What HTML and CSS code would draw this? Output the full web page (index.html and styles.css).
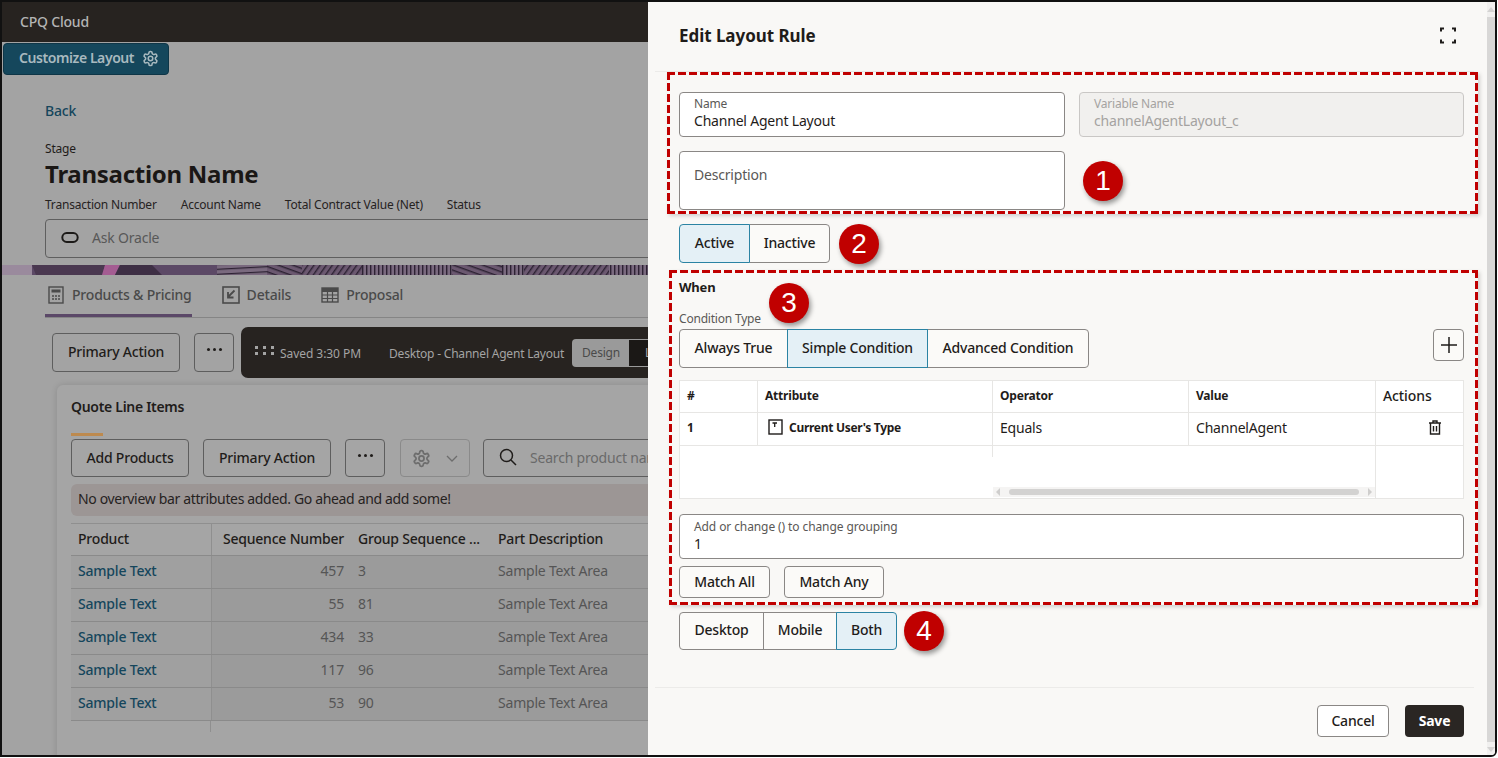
FILE: index.html
```html
<!DOCTYPE html>
<html lang="en">
<head>
<meta charset="utf-8">
<title>Edit Layout Rule</title>
<link rel="stylesheet" href="styles.css">
</head>
<body>
<svg class="sprite" width="0" height="0" aria-hidden="true">
  <symbol id="gear" viewBox="0 0 24 24">
    <path fill="none" stroke="currentColor" stroke-width="2.2" stroke-linejoin="round" d="M12.22 2h-.44a2 2 0 0 0-2 2v.18a2 2 0 0 1-1 1.73l-.43.25a2 2 0 0 1-2 0l-.15-.08a2 2 0 0 0-2.73.73l-.22.38a2 2 0 0 0 .73 2.73l.15.1a2 2 0 0 1 1 1.72v.51a2 2 0 0 1-1 1.74l-.15.09a2 2 0 0 0-.73 2.73l.22.38a2 2 0 0 0 2.73.73l.15-.08a2 2 0 0 1 2 0l.43.25a2 2 0 0 1 1 1.73V20a2 2 0 0 0 2 2h.44a2 2 0 0 0 2-2v-.18a2 2 0 0 1 1-1.73l.43-.25a2 2 0 0 1 2 0l.15.08a2 2 0 0 0 2.73-.73l.22-.39a2 2 0 0 0-.73-2.73l-.15-.08a2 2 0 0 1-1-1.74v-.5a2 2 0 0 1 1-1.74l.15-.09a2 2 0 0 0 .73-2.73l-.22-.38a2 2 0 0 0-2.73-.73l-.15.08a2 2 0 0 1-2 0l-.43-.25a2 2 0 0 1-1-1.73V4a2 2 0 0 0-2-2z"/>
    <circle cx="12" cy="12" r="3.2" fill="none" stroke="currentColor" stroke-width="2.2"/>
  </symbol>
  <pattern id="h1" width="5" height="5" patternUnits="userSpaceOnUse" patternTransform="rotate(20)"><rect width="5" height="5" fill="#6b5870"/><rect width="5" height="1.4" fill="#2d2233"/></pattern>
  <pattern id="h2" width="5" height="5" patternUnits="userSpaceOnUse" patternTransform="rotate(-55)"><rect width="5" height="5" fill="#6b5870"/><rect width="5" height="1.4" fill="#2d2233"/></pattern>
  <pattern id="h3" width="4" height="4" patternUnits="userSpaceOnUse"><rect width="4" height="4" fill="#7a6a7f"/><rect width="1.4" height="4" fill="#2d2233"/></pattern>
  <pattern id="h4" width="5" height="5" patternUnits="userSpaceOnUse" patternTransform="rotate(-3)"><rect width="5" height="5" fill="#7a6a7f"/><rect width="5" height="1.2" fill="#2d2233"/></pattern>
</svg>

<div class="frame">
  <main class="page">
    <header class="topbar">CPQ Cloud</header>
    <button class="customize"><span>Customize Layout</span>
      <svg class="customize-gear"><use href="#gear"/></svg>
    </button>
    <section class="head">
      <a class="back">Back</a>
      <div class="stage">Stage</div>
      <h1 class="txn-name">Transaction Name</h1>
      <div class="meta"><span>Transaction Number</span><span>Account Name</span><span>Total Contract Value (Net)</span><span>Status</span></div>
      <div class="ask">
        <svg class="oracle" viewBox="0 0 16 10"><rect x="1" y="1" width="14" height="8" rx="4" fill="none" stroke="#1c1a18" stroke-width="1.8"/></svg>
        <span>Ask Oracle</span>
      </div>
    </section>
    <svg class="banner" viewBox="0 0 646 10" preserveAspectRatio="none" aria-hidden="true">
      <rect width="646" height="10" fill="#5c4966"/>
      <rect width="30" height="10" fill="#9a8a9d"/>
      <path d="M30 0H103L100 10H34Z" fill="#4a3850"/>
      <path d="M103 0H118L113 10H100Z" fill="#a45c92"/>
      <path d="M118 0H150L160 10H113Z" fill="#3e2f45"/>
      <rect x="215" width="50" height="10" fill="url(#h4)"/>
      <rect x="265" width="35" height="10" fill="url(#h1)"/>
      <rect x="300" width="60" height="10" fill="url(#h2)"/>
      <rect x="360" width="90" height="10" fill="url(#h3)"/>
      <rect x="450" width="50" height="10" fill="url(#h1)"/>
      <rect x="500" width="22" height="10" fill="url(#h3)"/>
      <rect x="522" width="85" height="10" fill="url(#h2)"/>
      <rect x="607" width="39" height="10" fill="url(#h3)"/>
    </svg>
    <nav class="tabs">
      <a class="tab tab-on">
        <svg class="tab-ico" viewBox="0 0 16 18"><rect x="1" y="1" width="14" height="16" fill="none" stroke="currentColor" stroke-width="1.4"/><rect x="3.5" y="3.5" width="9" height="3" fill="currentColor"/><path d="M4 10h2M7 10h2M10 10h2M4 13h2M7 13h2M10 13h2" stroke="currentColor" stroke-width="1.5"/></svg>
        Products &amp; Pricing</a>
      <a class="tab">
        <svg class="tab-ico" viewBox="0 0 18 18"><rect x="1" y="1" width="16" height="16" fill="none" stroke="currentColor" stroke-width="1.6"/><path d="M12.5 4.5L6 11M6 6V11.500H11.500" fill="none" stroke="currentColor" stroke-width="1.8"/></svg>
        Details</a>
      <a class="tab">
        <svg class="tab-ico" viewBox="0 0 18 16"><rect x="1" y="1" width="16" height="14" fill="none" stroke="currentColor" stroke-width="1.4"/><path d="M1 4.500H17M1 8H17M1 11.500H17M6.500 4.500V15M11.500 4.500V15" stroke="currentColor" stroke-width="1.2"/><rect x="1" y="1" width="16" height="3" fill="currentColor"/></svg>
        Proposal</a>
    </nav>
    <div class="toolbar">
      <button class="btn btn-primary-action">Primary Action</button>
      <button class="btn btn-more"><i class="dots"></i></button>
      <div class="editbar">
        <span class="grip"><i></i><i></i><i></i><i></i><i></i><i></i></span>
        <span class="saved">Saved 3:30 PM</span>
        <span class="layout-name">Desktop - Channel Agent Layout</span>
        <span class="design">Design</span>
        <span class="layout-tab">Layout</span>
      </div>
    </div>
    <section class="card">
      <h2 class="card-title">Quote Line Items</h2>
      <div class="accent"></div>
      <div class="card-actions">
        <button class="btn btn-add">Add Products</button>
        <button class="btn btn-primary-action">Primary Action</button>
        <button class="btn btn-more"><i class="dots"></i></button>
        <button class="btn btn-gear">
          <svg class="gear-ico"><use href="#gear"/></svg>
          <svg class="chev" viewBox="0 0 12 7"><path d="M1 1l5 5 5-5" fill="none" stroke="currentColor" stroke-width="1.3"/></svg>
        </button>
        <div class="search">
          <svg class="search-ico" viewBox="0 0 18 18"><circle cx="7.500" cy="7.500" r="6" fill="none" stroke="#1f1c1a" stroke-width="1.5"/><path d="M12 12l5 5" stroke="#1f1c1a" stroke-width="1.5"/></svg>
          <span>Search product name</span>
        </div>
      </div>
      <div class="notice">No overview bar attributes added. Go ahead and add some!</div>
      <table class="lines">
        <colgroup><col class="c140"><col class="c140"><col class="c140"><col class="crest"></colgroup>
        <thead><tr><th>Product</th><th class="num">Sequence Number</th><th>Group Sequence ...</th><th>Part Description</th></tr></thead>
        <tbody>
          <tr><td><a>Sample Text</a></td><td class="num">457</td><td>3</td><td>Sample Text Area</td></tr>
          <tr><td><a>Sample Text</a></td><td class="num">55</td><td>81</td><td>Sample Text Area</td></tr>
          <tr><td><a>Sample Text</a></td><td class="num">434</td><td>33</td><td>Sample Text Area</td></tr>
          <tr><td><a>Sample Text</a></td><td class="num">117</td><td>96</td><td>Sample Text Area</td></tr>
          <tr><td><a>Sample Text</a></td><td class="num">53</td><td>90</td><td>Sample Text Area</td></tr>
        </tbody>
      </table>
      <div class="lines-stub"></div>
    </section>
  </main>

  <aside class="drawer">
    <div class="drawer-main">
      <header class="drawer-head">
        <h2>Edit Layout Rule</h2>
        <svg class="expand" viewBox="0 0 16 16"><path d="M1 4V1H4M12 1H15V4M15 12V15H12M4 15H1V12" fill="none" stroke="#1f1c1a" stroke-width="2"/></svg>
      </header>

      <section class="callout callout-1">
        <div class="field"><label>Name</label><div class="val">Channel Agent Layout</div></div>
        <div class="field field-off"><label>Variable Name</label><div class="val">channelAgentLayout_c</div></div>
        <div class="field field-desc"><span>Description</span></div>
        <div class="badge badge-side">1</div>
      </section>

      <div class="seg-row seg-row-2">
        <div class="seg">
          <span class="seg-item seg-a on">Active</span>
          <span class="seg-item seg-b">Inactive</span>
        </div>
        <div class="badge">2</div>
      </div>

      <section class="callout callout-3">
        <h3 class="when">When</h3>
        <div class="badge badge-3">3</div>
        <div class="ctype">Condition Type</div>
        <div class="ctype-row">
          <div class="seg seg-cond">
            <span class="seg-item seg-c">Always True</span>
            <span class="seg-item seg-d on">Simple Condition</span>
            <span class="seg-item seg-e">Advanced Condition</span>
          </div>
          <button class="plus"><svg viewBox="0 0 16 16"><path d="M8 0V16M0 8H16" stroke="#1f1c1a" stroke-width="1.5"/></svg></button>
        </div>
        <div class="cond-table">
          <div class="ct ct-h">#</div>
          <div class="ct ct-h">Attribute</div>
          <div class="ct ct-h">Operator</div>
          <div class="ct ct-h">Value</div>
          <div class="ct ct-h ct-actions">Actions</div>
          <div class="ct ct-r ct-b">1</div>
          <div class="ct ct-r ct-b ct-attr">
            <svg class="tbox" viewBox="0 0 15 16"><rect x="1" y="1" width="13" height="14" fill="#fff" stroke="#1f1c1a" stroke-width="1.4"/><path d="M4.500 4H9M6.700 4V8" stroke="#1f1c1a" stroke-width="1.300"/></svg>
            Current User's Type</div>
          <div class="ct ct-r">Equals</div>
          <div class="ct ct-r">ChannelAgent</div>
          <div class="ct ct-trash">
            <svg class="trash" viewBox="0 0 14 15"><path d="M1 3H13M5 3V1H9V3M2.500 3V14H11.500V3M5.500 6V11.500M8.500 6V11.500" fill="none" stroke="#1f1c1a" stroke-width="1.400"/></svg>
          </div>
          <div class="ct-fill-a"></div>
          <div class="ct-fill-b">
            <div class="hscroll"><i class="arr-l"></i><i class="thumb"></i><i class="arr-r"></i></div>
          </div>
          <div class="ct-fill-c"></div>
        </div>
        <div class="field field-group"><label>Add or change () to change grouping</label><div class="val">1</div></div>
        <div class="match-row">
          <button class="btn-light btn-all">Match All</button>
          <button class="btn-light btn-any">Match Any</button>
        </div>
      </section>

      <div class="seg-row seg-row-4">
        <div class="seg">
          <span class="seg-item seg-f">Desktop</span>
          <span class="seg-item seg-g">Mobile</span>
          <span class="seg-item seg-h on">Both</span>
        </div>
        <div class="badge">4</div>
      </div>

      <footer class="drawer-foot">
        <button class="btn-light btn-cancel">Cancel</button>
        <button class="btn-save">Save</button>
      </footer>
    </div>
    <div class="vscroll"><i class="v-up"></i><i class="v-thumb"></i><i class="v-down"></i></div>
  </aside>
</div>
</body>
</html>
```
FILE: styles.css
```css
* { box-sizing: border-box; }
html, body { margin: 0; padding: 0; background: #fff; }
body { font-family: "Noto Sans", "Liberation Sans", sans-serif; font-size: 14px; letter-spacing: -0.2px; color: #1f1c1a; }
button { font: inherit; letter-spacing: inherit; color: inherit; padding: 0 0 2px; cursor: default; }
h1, h2, h3 { margin: 0; }
.sprite { position: absolute; }

.frame { width: 1497px; height: 757px; border: 2px solid #111; border-bottom-right-radius: 6px; display: flex; overflow: hidden; background: #a3a3a3; }

/* dimmed page */
.page { width: 646px; flex: none; overflow: hidden; background: #a3a3a3; }
.topbar { height: 40px; background: #272320; color: #b4b4b4; font-size: 14px; font-weight: 500; line-height: 39px; padding-left: 18px; }
.customize { display: flex; align-items: center; gap: 8px; width: 166px; height: 32px; margin: 1px 0 0 1px; padding: 0 0 3px 15px; background: #15475c; border: 1px solid #0f3647; border-radius: 4px; color: #a8b9bf; font-weight: 600; letter-spacing: -0.42px; white-space: nowrap; }
.customize-gear { width: 17px; height: 17px; margin-top: 2px; }

.head { padding-left: 43px; }
.back { display: block; margin-top: 27px; line-height: 18px; color: #15465c; font-weight: 500; }
.stage { margin-top: 21px; font-size: 12px; line-height: 16px; color: #1f1c1a; }
.txn-name { margin-top: 2px; font-size: 24px; line-height: 30px; font-weight: 700; color: #1a1715; letter-spacing: -0.27px; }
.meta { display: flex; gap: 24px; margin-top: 8px; font-size: 12px; line-height: 16px; color: #26221f; white-space: nowrap; }
.ask { display: flex; align-items: center; width: 700px; height: 39px; margin-top: 6px; padding: 0 0 3px 15px; border: 1px solid #5f5f5f; border-radius: 4px; color: #585858; }
.oracle { width: 18px; height: 11px; margin-right: 13px; }

.banner { display: block; width: 646px; height: 10px; margin-top: 7px; }

.tabs { display: flex; gap: 28px; height: 43px; margin-left: 43px; border-bottom: 1px solid #858585; width: 700px; }
.tab { display: flex; align-items: center; gap: 7px; height: 43px; padding: 0 0 4px 2px; color: #4a4a4a; font-weight: 500; white-space: nowrap; }
.tab-on { border-bottom: 3px solid #5b4868; height: 42px; padding-bottom: 0; }
.tab-ico { width: 18px; height: 18px; flex: none; }

.toolbar { display: flex; align-items: center; height: 51px; margin-top: 9px; padding-left: 50px; width: 900px; }
.toolbar .btn { margin-top: -1px; }
.btn { height: 39px; border: 1px solid #5e5e5e; border-radius: 4px; background: transparent; color: #1f1c1a; font-weight: 500; white-space: nowrap; flex: none; }
.btn-primary-action { width: 128px; }
.btn-more { width: 40px; margin-left: 14px; display: flex; align-items: center; justify-content: center; }
.dots { display: block; width: 3px; height: 3px; background: #1f1c1a; box-shadow: 6px 0 0 #1f1c1a, -6px 0 0 #1f1c1a; border-radius: 50%; margin-top: -3px; }
.editbar { display: flex; align-items: center; flex: none; width: 600px; height: 51px; margin-left: 7px; padding-left: 14px; background: #272320; border-radius: 7px; color: #a4a4a4; font-size: 12px; white-space: nowrap; }
.grip { display: grid; grid-template-columns: repeat(3, 3px); gap: 3px 5px; width: 25px; margin-top: -4px; }
.grip i { display: block; width: 3px; height: 3px; background: #a4a4a4; }
.saved { width: 109px; margin-top: 1px; letter-spacing: -0.06px; }
.layout-name { width: 183px; margin-top: 1px; }
.design { width: 56px; height: 28px; line-height: 28px; padding-left: 10px; background: #9a9a9a; color: #4a4a4a; border-radius: 4px 0 0 4px; }
.layout-tab { width: 60px; height: 28px; line-height: 26px; padding-left: 16px; border: 1px solid #9a9a9a; background: #1b1816; color: #a4a4a4; }

.card { margin: 7px 0 0 55px; width: 800px; height: 400px; padding: 13px 0 0 14px; background: #a5a5a5; border-radius: 6px; box-shadow: 0 0 6px rgba(0,0,0,.14); }
.card-title { font-size: 14px; line-height: 18px; font-weight: 600; color: #1f1c1a; letter-spacing: -0.3px; }
.accent { width: 32px; height: 3px; margin-top: 17px; background: #bd8a4f; }
.card-actions { display: flex; align-items: center; margin-top: 3px; height: 38px; }
.card-actions .btn { height: 38px; }
.btn-add { width: 118px; margin-right: 14px; }
.btn-gear { display: flex; align-items: center; gap: 15px; width: 70px; margin-left: 15px; padding: 0 0 0 11px; border-color: #8a8a8a; color: #6d6d6d; }
.gear-ico { width: 19px; height: 21px; }
.chev { width: 12px; height: 7px; }
.search { display: flex; align-items: center; width: 300px; height: 38px; margin-left: 13px; padding: 0 0 2px 15px; border: 1px solid #5e5e5e; border-radius: 4px; color: #6a6a6a; white-space: nowrap; flex: none; }
.search-ico { width: 18px; height: 18px; margin-right: 13px; }
.notice { margin-top: 7px; height: 32px; line-height: 29px; padding-left: 7px; background: #9c9695; border-radius: 6px; color: #26221f; letter-spacing: -0.34px; white-space: nowrap; }

.lines { margin-top: 7px; width: 729px; table-layout: fixed; border-collapse: collapse; }
.c140 { width: 140px; }
.crest { width: 309px; }
.lines th { height: 32px; padding: 0 7px 3px; text-align: left; font-weight: 500; color: #1f1c1a; white-space: nowrap; border-top: 1px solid #8f8f8f; border-bottom: 1px solid #8a8a8a; }
.lines td { height: 33px; padding: 0 7px 4px; color: #555; background: #9b9b9b; border-bottom: 1px solid #8a8a8a; white-space: nowrap; }
.lines td:first-child { background: #a0a0a0; border-right: 1px solid #8f8f8f; }
.lines th:first-child { border-right: 1px solid #8f8f8f; }
.lines a { color: #15465c; font-weight: 500; }
.num { text-align: right !important; }
.lines-stub { width: 140px; height: 11px; border-right: 1px solid #8f8f8f; }

/* drawer */
.drawer { flex: 1; display: flex; background: #f9f8f6; min-width: 0; }
.drawer-main { flex: 1; display: flex; flex-direction: column; padding-left: 31px; padding-right: 23px; min-width: 0; }
.vscroll { display: flex; flex-direction: column; align-items: center; width: 8px; flex: none; padding: 5px 0 3px; background: #f1f0ef; }
.v-up { display: block; border: 4px solid transparent; border-top: 0; border-bottom: 5px solid #d4d3d2; }
.v-thumb { display: block; flex: 1; width: 100%; margin: 5px 0; background: #d8d7d6; }
.v-down { display: block; border: 4px solid transparent; border-bottom: 0; border-top: 5px solid #d4d3d2; }

.drawer-head { display: flex; align-items: center; justify-content: space-between; height: 70px; margin: 0 -10px 0 -24px; padding: 0 17px 0 24px; border-bottom: 1px solid #ecebe9; flex: none; }
.drawer-head h2 { font-size: 17px; line-height: 24px; font-weight: 700; color: #1f1c1a; margin-top: -2px; letter-spacing: -0.05px; }
.expand { width: 16px; height: 17px; margin-top: -2px; margin-right: 1px; }

.callout {
  position: relative; flex: none;
  background-image:
    linear-gradient(90deg, #c00000 8px, transparent 8px),
    linear-gradient(90deg, #c00000 8px, transparent 8px),
    linear-gradient(#c00000 8px, transparent 8px),
    linear-gradient(#c00000 8px, transparent 8px);
  background-size: 11px 3px, 11px 3px, 3px 11px, 3px 11px;
  background-position: 0 0, 0 100%, 0 0, 100% 0;
  background-repeat: repeat-x, repeat-x, repeat-y, repeat-y;
  box-shadow: 2px 2px 4px rgba(0,0,0,.16);
}
.callout-1 { display: grid; grid-template-columns: 386px 385px; column-gap: 14px; row-gap: 14px; grid-template-rows: 45px 59px; height: 142px; margin: 0 -14px 0 -12px; padding: 20px 14px 0 12px; }
.callout-3 { height: 335px; margin: 7px -14px 0 -10px; padding: 8px 14px 0 10px; }

.field { position: relative; background: #fff; border: 1px solid #8a8785; border-radius: 4px; padding: 3px 14px 0; }
.field label { display: block; font-size: 12px; line-height: 16px; color: #5a5856; }
.field .val { font-size: 14px; line-height: 20px; margin-top: -1px; color: #1f1c1a; }
.field-off { background: #f1f0ee; border-color: #c9c7c5; }
.field-off label, .field-off .val { color: #a5a3a1; }
.field-desc { display: flex; padding-top: 13px; color: #5a5856; }
.badge { width: 40px; height: 40px; border-radius: 50%; background: #c00000; color: #fff; font-family: "Liberation Sans", Arial, sans-serif; font-size: 28px; letter-spacing: 0; line-height: 40px; text-align: center; box-shadow: 2px 3px 5px rgba(0,0,0,.4); flex: none; }
.badge-side { align-self: center; margin-left: 4px; }
.badge-3 { position: absolute; left: 100px; top: 13px; }

.seg-row { display: flex; align-items: center; flex: none; }
.seg-row-2 { height: 39px; margin-top: 10px; gap: 9px; }
.seg-row-4 { height: 38px; margin-top: 7px; gap: 7px; }
.seg { display: flex; height: 100%; }
.seg-item { display: flex; align-items: center; justify-content: center; padding-bottom: 2px; font-weight: 500; color: #1f1c1a; background: #fbfaf8; border: 1px solid #8a8785; margin-left: -1px; white-space: nowrap; }
.seg-item:first-child { margin-left: 0; border-radius: 4px 0 0 4px; }
.seg-item:last-child { border-radius: 0 4px 4px 0; }
.seg-item.on { position: relative; z-index: 1; background: #e4f0f6; border-color: #2b83a3; }
.seg-row-4 .seg-item { padding-bottom: 3px; }
.seg-a { width: 71px; } .seg-b { width: 81px; }
.seg-c { width: 109px; } .seg-d { width: 141px; } .seg-e { width: 162px; }
.seg-f { width: 85px; } .seg-g { width: 74px; } .seg-h { width: 61px; }

.when { font-size: 13px; line-height: 18px; font-weight: 700; color: #1f1c1a; }
.ctype { margin-top: 15px; font-size: 12px; line-height: 16px; color: #5a5856; }
.ctype-row { display: flex; justify-content: space-between; align-items: flex-start; margin-top: 2px; height: 39px; }
.seg-cond { height: 39px; }
.plus { display: flex; align-items: center; justify-content: center; width: 31px; height: 32px; padding: 0; background: #fbfaf8; border: 1px solid #8a8785; border-radius: 4px; }
.plus svg { width: 16px; height: 16px; }

.cond-table { display: grid; grid-template-columns: 78px 235px 196px 187px 1fr; grid-template-rows: 32px 33px 52px; height: 119px; margin-top: 12px; background: #fff; border: 1px solid #e7e6e4; }
.ct { display: flex; align-items: center; padding-left: 7px; font-size: 14px; border-right: 1px solid #e7e6e4; border-bottom: 1px solid #e7e6e4; white-space: nowrap; }
.ct:nth-child(5n) { border-right: 0; }
.ct-h { font-size: 12px; font-weight: 700; padding-bottom: 2px; }
.ct-actions { font-size: 14px; font-weight: 500; letter-spacing: -0.1px; }
.ct-r { padding-bottom: 3px; }
.ct-b { font-size: 12px; font-weight: 700; }
.ct-attr { gap: 6px; padding-left: 10px; letter-spacing: -0.3px; }
.tbox { width: 15px; height: 16px; margin-top: -2px; }
.ct-trash { justify-content: center; padding: 0 0 3px 31px; }
.trash { width: 14px; height: 15px; }
.ct-fill-a { grid-column: 1 / 3; height: 11px; border-right: 1px solid #e7e6e4; }
.ct-fill-b { grid-column: 3 / 5; display: flex; align-items: flex-end; padding-bottom: 1px; border-right: 1px solid #e7e6e4; }
.ct-fill-c { grid-column: 5; }
.hscroll { display: flex; align-items: center; justify-content: space-between; width: 100%; height: 10px; padding: 0 3px; background: #f5f4f3; }
.thumb { display: block; width: 350px; height: 6px; background: #d3d2d1; border-radius: 3px; }
.arr-l { display: block; border: 4px solid transparent; border-right: 4px solid #cfcecd; border-left: 0; }
.arr-r { display: block; border: 4px solid transparent; border-left: 4px solid #cfcecd; border-right: 0; }

.field-group { height: 45px; margin-top: 15px; padding-top: 4px; }
.field-group label { letter-spacing: -0.1px; }
.match-row { display: flex; gap: 14px; margin-top: 7px; }
.btn-light { height: 32px; background: #fbfaf8; border: 1px solid #8a8785; border-radius: 4px; font-weight: 500; color: #1f1c1a; white-space: nowrap; }
.btn-all { width: 91px; } .btn-any { width: 100px; }

.drawer-foot { display: flex; justify-content: flex-end; gap: 16px; margin: auto -10px 0 -24px; padding: 17px 10px 0 0; height: 68px; border-top: 1px solid #ecebe9; flex: none; }
.btn-cancel { width: 72px; background: #fff; }
.btn-save { width: 59px; height: 32px; background: #2a2623; border: 0; border-radius: 4px; color: #fff; font-weight: 700; }
```
